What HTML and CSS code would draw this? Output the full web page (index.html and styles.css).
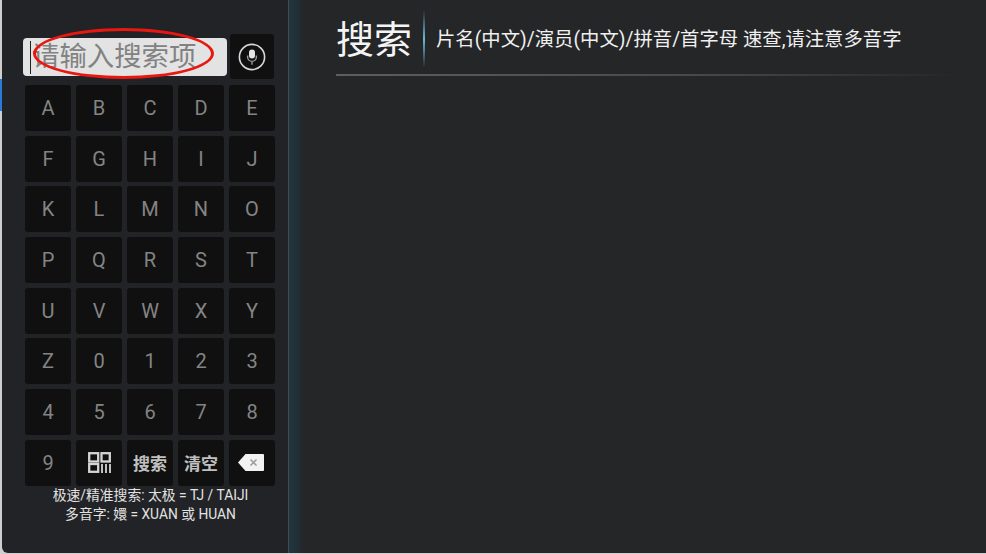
FILE: index.html
```html
<!DOCTYPE html>
<html lang="zh">
<head>
<meta charset="utf-8">
<title>搜索</title>
<link rel="stylesheet" href="styles.css">
</head>
<body>
<div class="app">
  <aside class="side">
    <div class="search-row">
      <div class="input"><span class="caret"></span><span class="ph">请输入搜索项</span></div>
      <div class="key mic">
        <svg viewBox="0 0 28 28" width="28" height="28"><circle cx="14" cy="14" r="12.6" fill="none" stroke="#d8d8d8" stroke-width="1.6"/><rect x="11" y="6.5" width="6" height="9" rx="3" fill="#e4e4e4"/><path d="M9.6 12.5v1.5a4.4 4.4 0 0 0 8.8 0v-1.5M14 18.4v3.4" fill="none" stroke="#9a9a9a" stroke-width="1.4"/></svg>
      </div>
    </div>
    <div class="keys">
      <div class="key">A</div><div class="key">B</div><div class="key">C</div><div class="key">D</div><div class="key">E</div>
      <div class="key">F</div><div class="key">G</div><div class="key">H</div><div class="key">I</div><div class="key">J</div>
      <div class="key">K</div><div class="key">L</div><div class="key">M</div><div class="key">N</div><div class="key">O</div>
      <div class="key">P</div><div class="key">Q</div><div class="key">R</div><div class="key">S</div><div class="key">T</div>
      <div class="key">U</div><div class="key">V</div><div class="key">W</div><div class="key">X</div><div class="key">Y</div>
      <div class="key">Z</div><div class="key">0</div><div class="key">1</div><div class="key">2</div><div class="key">3</div>
      <div class="key">4</div><div class="key">5</div><div class="key">6</div><div class="key">7</div><div class="key">8</div>
      <div class="key">9</div>
      <div class="key">
        <svg viewBox="0 0 23 21" width="23" height="21" fill="none" stroke="#d4d4d4" stroke-width="2.3"><rect x="1.2" y="1.2" width="9" height="8.3"/><rect x="13.5" y="1.2" width="8.3" height="8.3"/><rect x="1.2" y="12" width="9" height="7.8"/><path d="M14 12v9M18 12v9M22 12v9" stroke-width="1.8"/></svg>
      </div>
      <div class="key word">搜索</div>
      <div class="key word">清空</div>
      <div class="key del">
        <svg viewBox="0 0 26 17" width="26" height="17"><path d="M7.5 0H25a1 1 0 0 1 1 1v15a1 1 0 0 1-1 1H7.5L0 8.5Z" fill="#f2f2f2"/><path d="M12.5 5.5l6 6M18.5 5.5l-6 6" stroke="#999" stroke-width="1.5"/></svg>
      </div>
    </div>
    <p class="hint">极速/精准搜索: 太极 = TJ / TAIJI<br>多音字: 嬛 = XUAN 或 HUAN</p>
  </aside>
  <div class="glow"></div>
  <main class="main">
    <header class="head">
      <h1>搜索</h1>
      <span class="sep"></span>
      <span class="desc">片名(中文)/演员(中文)/拼音/首字母 速查,请注意多音字</span>
    </header>
  </main>
</div>
<div class="edge"></div>
<div class="ring"></div>
</body>
</html>
```
FILE: styles.css
```css
* { box-sizing: border-box; }
html, body { margin: 0; height: 100%; background: #cfcfcf; overflow: hidden; }
body { font-family: Roboto, "Noto Sans CJK SC", sans-serif; position: relative; }
.app { width: 986px; height: 553px; padding-left: 2px; display: flex; }
.side { width: 287px; height: 100%; background: #222326; border-bottom-left-radius: 6px; padding: 34px 11px 0 21px; border-right: 1px solid #47494b; }
.search-row { display: flex; align-items: center; gap: 3px; padding-bottom: 6px; }
.input { width: 204px; height: 38px; background: #e3e3e3; border-radius: 4px; position: relative; display: flex; align-items: center; padding-left: 9px; }
.caret { position: absolute; left: 7px; top: 3px; width: 1px; height: 33px; background: #222; }
.ph { font-size: 27.4px; color: #828282; line-height: 36px; white-space: nowrap; }
.key { background: #101010; border-radius: 3px; display: flex; align-items: center; justify-content: center; color: #848484; font-size: 20px; height: 46px; }
.mic { width: 44px; height: 45px; flex: none; }
.keys { display: grid; grid-template-columns: repeat(5, 46px); grid-auto-rows: 46px; column-gap: 5px; row-gap: 4.7px; margin-left: 2px; width: 250px; }
.word { font-size: 17px; color: #c0c0c0; font-weight: 700; }
.del svg { margin-right: 2px; }
.hint { margin: 0; width: 255px; text-align: center; color: #e2e2e2; font-size: 13.8px; line-height: 19px; }
.glow { width: 14px; height: 100%; background: linear-gradient(90deg, #1e3743, #25282b); }
.main { flex: 1; background: #252628; padding: 0 0 0 33px; }
.head { display: flex; align-items: center; height: 76px; position: relative; }
.head::after { content: ""; position: absolute; left: 0; right: 0; bottom: 0; height: 2px; background: linear-gradient(90deg, #5c5e60, #48494b 55%, #252628 96%); }
h1 { margin: 0; padding-top: 4px; font-size: 38px; font-weight: 400; color: #f4f4f4; line-height: 72px; }
.sep { width: 2px; height: 58px; margin: 2px 11px 0 11px; background: linear-gradient(180deg, transparent, #6fb6d6 50%, transparent); }
.desc { font-size: 19.35px; color: #f0f0f0; white-space: nowrap; }
.edge { position: absolute; left: 0; top: 79px; width: 2px; height: 32px; background: #2a7bd8; }
.ring { position: absolute; left: 33px; top: 28px; width: 181px; height: 51px; border: 3px solid #e8170f; border-radius: 50%; }
```
